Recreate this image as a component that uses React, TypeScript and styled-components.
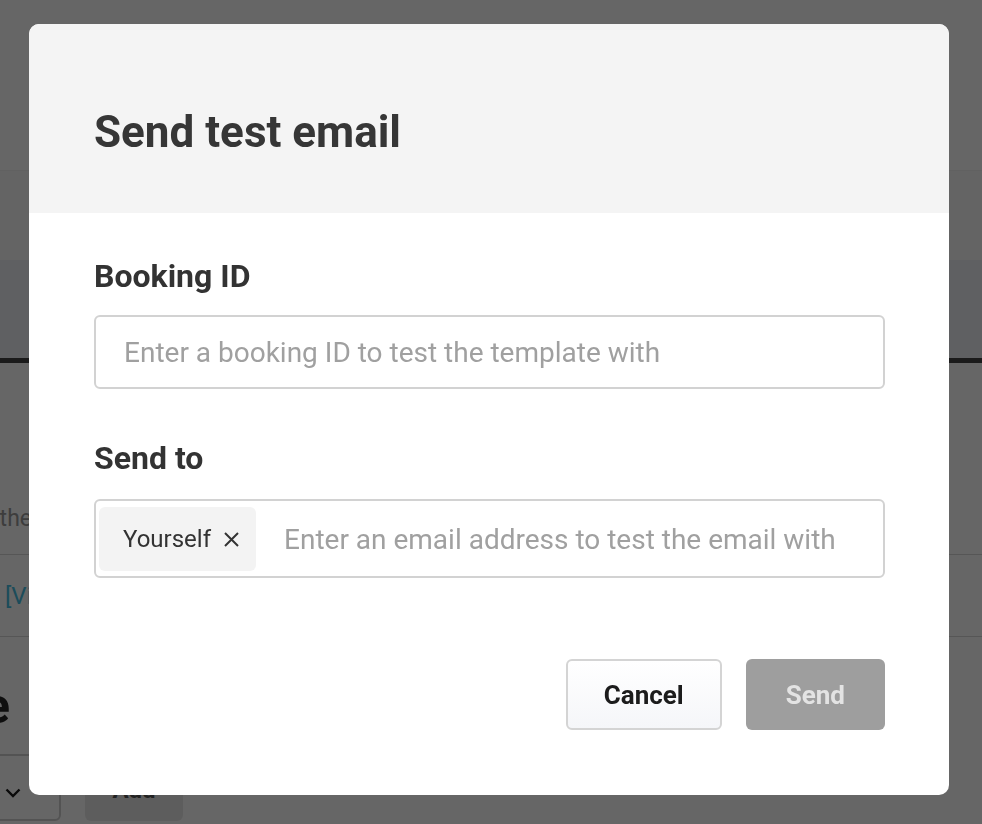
import React from "react";
import styled, { createGlobalStyle } from "styled-components";

const GlobalStyle = createGlobalStyle`
  html, body { margin: 0; padding: 0; }
  body {
    font-family: Roboto, "Liberation Sans", Arial, sans-serif;
    background: #ffffff;
    overflow: hidden;
  }
  * { box-sizing: border-box; }
`;

/* ---------- background page (under the dimmer) ---------- */

const Page = styled.div`
  display: flex;
  flex-direction: column;
  width: 100%;
  height: 824px;
  overflow: hidden;
`;

const TopBar = styled.header`
  height: 171px;
  background: #ffffff;
  border-bottom: 1px solid #f2f2f2;
`;

const SubBar = styled.div`
  height: 89px;
  background: #fafafa;
`;

const TabBand = styled.div`
  height: 103px;
  background: #eef1f5;
  border-bottom: 5px solid #444444;
`;

const Row = styled.div<{ $h: number; $align?: string; $line?: boolean }>`
  height: ${(p) => p.$h}px;
  display: flex;
  align-items: ${(p) => p.$align || "center"};
  border-bottom: ${(p) => (p.$line ? "1px solid #d6d6d6" : "none")};
  white-space: nowrap;
`;

const Clip = styled.div<{ $w: number }>`
  width: ${(p) => p.$w}px;
  overflow: hidden;
  display: flex;
  justify-content: flex-end;
  white-space: nowrap;
  flex: none;
`;

const Muted = styled.span`
  font-size: 23px;
  line-height: 28px;
  color: #9a9a9a;
  padding-bottom: 21px;
`;

const LinkText = styled.span`
  font-size: 24px;
  color: #46bde2;
  padding-left: 5px;
`;

const BigHeading = styled.span`
  font-size: 50px;
  font-weight: 700;
  line-height: 60px;
  color: #262626;
  padding-bottom: 18px;
`;

const Controls = styled.div`
  display: flex;
  gap: 24px;
  align-items: stretch;
  height: 67px;
`;

const SelectBox = styled.div`
  width: 81px;
  margin-left: -20px;
  border: 2px solid #d0d0d0;
  border-radius: 6px;
  display: flex;
  align-items: center;
  padding-left: 23px;
  padding-top: 10px;
`;

const AddButton = styled.div`
  width: 98px;
  background: #e9e9e9;
  border-radius: 6px;
  display: flex;
  justify-content: center;
  align-items: flex-start;
  padding-top: 22px;
  font-size: 24px;
  font-weight: 700;
  color: #555;
`;

/* ---------- overlay & modal ---------- */

const Overlay = styled.div`
  position: fixed;
  inset: 0;
  background: rgba(0, 0, 0, 0.6);
  display: flex;
  align-items: flex-start;
  padding: 24px 0 0 29px;
`;

const Modal = styled.div`
  width: 920px;
  background: #ffffff;
  border-radius: 10px;
  overflow: hidden;
  display: flex;
  flex-direction: column;
`;

const Header = styled.div`
  height: 189px;
  background: #f4f4f4;
  padding: 82px 64px 0 65px;
`;

const Title = styled.h1`
  margin: 0;
  font-size: 44px;
  line-height: 52px;
  font-weight: 700;
  color: #363636;
`;

const Body = styled.div`
  padding: 44px 64px 65px 65px;
  display: flex;
  flex-direction: column;
`;

const Field = styled.div<{ $gap: number }>`
  display: flex;
  flex-direction: column;
  gap: ${(p) => p.$gap}px;
  & + & {
    margin-top: 50px;
  }
`;

const Label = styled.label`
  font-size: 32px;
  line-height: 38px;
  font-weight: 700;
  color: #333333;
`;

const TextInput = styled.input`
  height: 74px;
  width: 100%;
  border: 2px solid #d2d2d2;
  border-radius: 6px;
  padding: 0 28px;
  font-family: inherit;
  font-size: 28px;
  color: #333;
  background: #fff;
  outline: none;
  &::placeholder {
    color: #a0a0a0;
  }
`;

const TagBox = styled.div`
  height: 79px;
  border: 2px solid #d2d2d2;
  border-radius: 6px;
  padding: 6px 4px 5px 3px;
  display: flex;
  align-items: stretch;
  gap: 28px;
`;

const Chip = styled.div`
  display: flex;
  align-items: center;
  gap: 13px;
  padding: 0 17px 0 24px;
  background: #f3f3f3;
  border-radius: 6px;
  font-size: 24px;
  color: #333333;
`;

const ChipInput = styled.input`
  flex: 1;
  min-width: 0;
  border: none;
  outline: none;
  background: transparent;
  font-family: inherit;
  font-size: 28px;
  color: #333;
  padding: 0;
  &::placeholder {
    color: #a0a0a0;
  }
`;

const Actions = styled.div`
  margin-top: 81px;
  display: flex;
  justify-content: flex-end;
  gap: 24px;
`;

const Button = styled.button<{ $primary?: boolean }>`
  height: 71px;
  padding: 0 ${(p) => (p.$primary ? 40 : 36)}px;
  border-radius: 6px;
  font-family: inherit;
  font-size: 26px;
  font-weight: 700;
  cursor: pointer;
  border: ${(p) => (p.$primary ? "none" : "2px solid #d4d4d4")};
  background: ${(p) =>
    p.$primary ? "#9e9e9e" : "linear-gradient(#ffffff, #f5f6f9)"};
  color: ${(p) => (p.$primary ? "#e3e3e3" : "#1c1c1c")};
`;

const XIcon = () => (
  <svg width="15" height="15" viewBox="0 0 15 15" aria-hidden="true">
    <path d="M1 1 L14 14 M14 1 L1 14" stroke="#333" strokeWidth="2" />
  </svg>
);

const Chevron = () => (
  <svg width="16" height="10" viewBox="0 0 16 10" aria-hidden="true">
    <path d="M1.5 1.5 L8 8 L14.5 1.5" stroke="#1a1a1a" strokeWidth="2.4" fill="none" />
  </svg>
);

export default function App() {
  return (
    <>
      <GlobalStyle />
      <Page>
        <TopBar />
        <SubBar />
        <TabBand />
        <Row $h={192} $align="flex-end" $line>
          <Clip $w={32}>
            <Muted>Send a test email with the</Muted>
          </Clip>
        </Row>
        <Row $h={82} $line>
          <LinkText>[View template]</LinkText>
        </Row>
        <Row $h={117} $align="flex-end">
          <Clip $w={10}>
            <BigHeading>Template</BigHeading>
          </Clip>
        </Row>
        <Controls>
          <SelectBox>
            <Chevron />
          </SelectBox>
          <AddButton>Add</AddButton>
        </Controls>
      </Page>
      <Overlay>
        <Modal role="dialog" aria-labelledby="send-test-title">
          <Header>
            <Title id="send-test-title">Send test email</Title>
          </Header>
          <Body>
            <Field $gap={20}>
              <Label htmlFor="booking-id">Booking ID</Label>
              <TextInput
                id="booking-id"
                placeholder="Enter a booking ID to test the template with"
              />
            </Field>
            <Field $gap={22}>
              <Label htmlFor="send-to">Send to</Label>
              <TagBox>
                <Chip>
                  Yourself
                  <XIcon />
                </Chip>
                <ChipInput
                  id="send-to"
                  placeholder="Enter an email address to test the email with"
                />
              </TagBox>
            </Field>
            <Actions>
              <Button>Cancel</Button>
              <Button $primary>Send</Button>
            </Actions>
          </Body>
        </Modal>
      </Overlay>
    </>
  );
}
